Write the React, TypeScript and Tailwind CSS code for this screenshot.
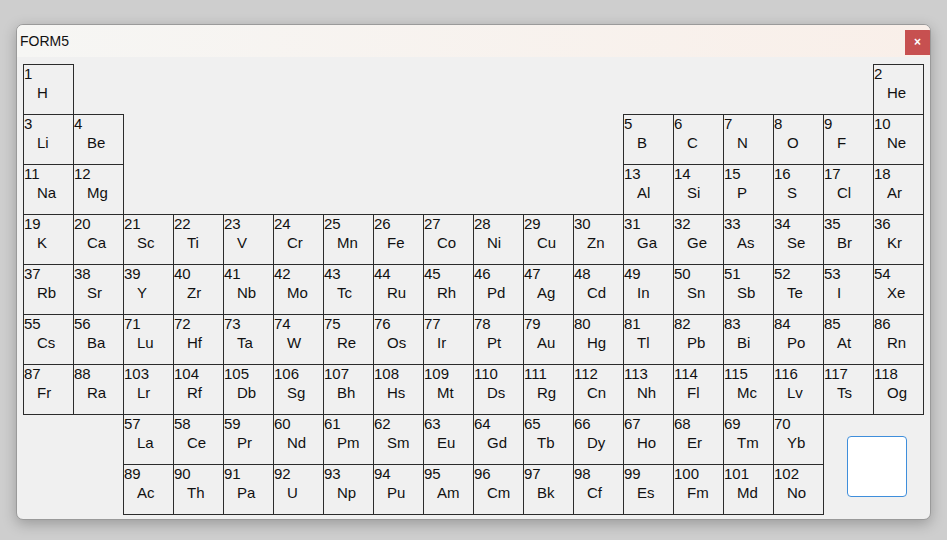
import React from "react";

const S =
  "H He Li Be B C N O F Ne Na Mg Al Si P S Cl Ar K Ca Sc Ti V Cr Mn Fe Co Ni Cu Zn Ga Ge As Se Br Kr Rb Sr Y Zr Nb Mo Tc Ru Rh Pd Ag Cd In Sn Sb Te I Xe Cs Ba La Ce Pr Nd Pm Sm Eu Gd Tb Dy Ho Er Tm Yb Lu Hf Ta W Re Os Ir Pt Au Hg Tl Pb Bi Po At Rn Fr Ra Ac Th Pa U Np Pu Am Cm Bk Cf Es Fm Md No Lr Rf Db Sg Bh Hs Mt Ds Rg Cn Nh Fl Mc Lv Ts Og".split(
    " "
  );

type Cell = { z: number; col: number; row: number };

function pos(z: number): { col: number; row: number } {
  if (z === 1) return { col: 1, row: 1 };
  if (z === 2) return { col: 18, row: 1 };
  if (z <= 4) return { col: z - 2, row: 2 };
  if (z <= 10) return { col: z + 8, row: 2 };
  if (z <= 12) return { col: z - 10, row: 3 };
  if (z <= 18) return { col: z, row: 3 };
  if (z <= 36) return { col: z - 18, row: 4 };
  if (z <= 54) return { col: z - 36, row: 5 };
  if (z <= 56) return { col: z - 54, row: 6 };
  if (z <= 70) return { col: z - 54, row: 8 };
  if (z <= 86) return { col: z - 68, row: 6 };
  if (z <= 88) return { col: z - 86, row: 7 };
  if (z <= 102) return { col: z - 86, row: 9 };
  return { col: z - 100, row: 7 };
}

const cells: Cell[] = Array.from({ length: 118 }, (_, i) => ({ z: i + 1, ...pos(i + 1) }));

export default function App() {
  return (
    <div
      className="w-[947px] h-[540px] bg-[#cecece] pt-[24px] pl-[16px]"
      style={{ fontFamily: '"Liberation Sans", Arial, sans-serif' }}
    >
      <div className="w-[915px] h-[496px] rounded-[7px] border border-[#9a9a9a] bg-[#f0f0f0] overflow-hidden shadow-[0_4px_14px_rgba(0,0,0,0.25)] flex flex-col">
        <div className="h-[32px] shrink-0 flex items-center justify-between bg-gradient-to-r from-[#f6f6f4] to-[#f9efe9] pl-[3px]">
          <span className="text-[14px] text-[#111]">FORM5</span>
          <div className="w-[25px] h-[25px] bg-[#c75050] flex items-center justify-center text-white text-[12px] font-bold leading-none mt-[2px]">
            ×
          </div>
        </div>
        <div className="pl-[6px] pt-[7px]">
          <div className="grid grid-cols-[repeat(18,50px)] grid-rows-[repeat(9,50px)]">
            {cells.map((c) => (
              <div
                key={c.z}
                className="w-[51px] h-[51px] border border-[#2b2b2b] text-[#111] text-[15px] leading-[18px]"
                style={{ gridColumnStart: c.col, gridRowStart: c.row }}
              >
                <div>{c.z}</div>
                <div className="pl-[13px] mt-[1px]">{S[c.z - 1]}</div>
              </div>
            ))}
            <div className="col-start-17 col-span-2 row-start-8 row-span-2 pl-[24px] pt-[22px]">
              <div className="w-[60px] h-[61px] bg-white border border-[#3f8edb] rounded-[4px]" />
            </div>
          </div>
        </div>
      </div>
    </div>
  );
}
